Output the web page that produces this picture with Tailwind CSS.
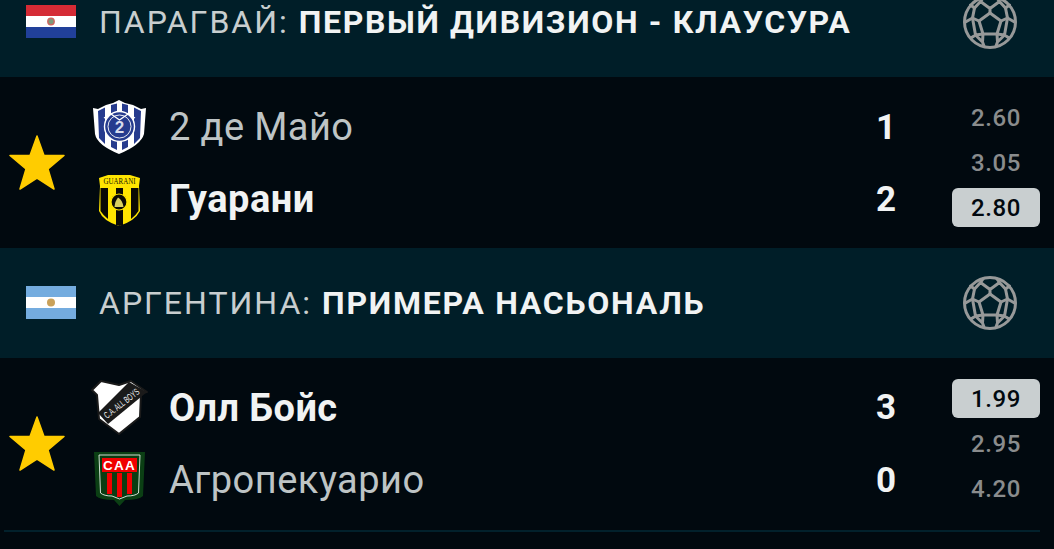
<!DOCTYPE html>
<html>
  <head>
    <meta charset="utf-8" />
    <title>Матчи</title>
    <script src="https://cdn.jsdelivr.net/npm/@tailwindcss/browser@4"></script>
  </head>
  <body class="h-[549px] overflow-hidden bg-[#01090f] font-['Roboto',sans-serif]">
    <svg class="hidden">
      <symbol id="ball" viewBox="0 0 54 54">
        <g fill="none" stroke="#979999" stroke-width="3" stroke-linejoin="round" stroke-linecap="round">
          <circle cx="27" cy="27" r="25.5" />
          <path d="M27 18 38 26 34 39H20L16 26Z" />
          <path d="M27 18V13.5L17.5 6.5 11.5 13 9.5 23 16 26M27 13.5 36.5 6.5 42.5 13 44.5 23 38 26" />
          <path d="M17.5 6.5 20 3M36.5 6.5 34 3M11.5 13 7.5 10M42.5 13 46.5 10M9.5 23 2.5 27M44.5 23 51.5 27" />
          <path d="M9.5 23 12.5 40 20 39 19.5 47 12.5 40M44.5 23 41.5 40 34 39 34.5 47 41.5 40M19.5 47 21 51M34.5 47 33 51M12.5 40 8 43M41.5 40 46 43" />
        </g>
      </symbol>
      <symbol id="star" viewBox="0 0 56 56">
        <path d="M28 1 35 20.5H55L39 34 45 54 28 43 11 54 17 34 1 20.5H21Z" fill="#ffcc00" stroke="#ffcc00" stroke-width="1.5" stroke-linejoin="round" />
      </symbol>
    </svg>

    <!-- Парагвай -->
    <div class="flex h-[110px] -mt-[33px] items-center bg-[#001e28] pl-[26px] pr-[37px]">
      <svg class="-mt-px h-[33px] w-[50px] shrink-0" viewBox="0 0 50 33">
        <rect width="50" height="11" fill="#d52b35" />
        <rect y="11" width="50" height="11" fill="#fff" />
        <rect y="22" width="50" height="11" fill="#21409a" />
        <circle cx="25" cy="16.5" r="3.2" fill="#7d9a7a" stroke="#d0655f" stroke-width="1.4" />
      </svg>
      <div class="ml-[23px] flex-1 text-[32px] tracking-[2px] text-[#c8cecf]">ПАРАГВАЙ: <span class="font-bold tracking-[1.65px] text-[#f1f3f3]">ПЕРВЫЙ ДИВИЗИОН - КЛАУСУРА</span></div>
      <svg class="size-[54px] shrink-0"><use href="#ball" /></svg>
    </div>

    <div class="flex h-[171px] items-center">
      <div class="flex w-[74px] justify-center"><svg class="size-[56px]"><use href="#star" /></svg></div>
      <div class="flex-1">
        <div class="flex h-[72px] items-center">
          <svg class="ml-[15px] size-[60px] shrink-0" viewBox="0 0 60 60">
            <path d="M4 11 9 12 17 8 24 6 30 3 36 6 44 8 52 12 57 11 55 37Q52 48 30 57 8 48 6 37Z" fill="#fff" />
            <path d="M9 14 16 10.5V47L10 41ZM22 8 28 6.5V53L22 50ZM33 6.5 39 8V50L33 53ZM45 10.5 52 14 51 41 45 47Z" fill="#263b8e" />
            <circle cx="30.5" cy="29.5" r="15" fill="#263b8e" stroke="#fff" stroke-width="1.4" />
            <circle cx="30.5" cy="29.5" r="11.5" fill="#263b8e" stroke="#fff" stroke-width="0.9" />
            <path d="M15 21 22 17 30.5 23 39 17 46 21" fill="none" stroke="#fff" stroke-width="1.4" />
            <text x="30.5" y="36" text-anchor="middle" font-family="'Liberation Sans'" font-weight="700" font-size="17" fill="#d8dcec">2</text>
          </svg>
          <div class="ml-[20px] flex-1 pt-px text-[38px] tracking-[0.4px] text-[#bec4c5]">2 де Майо</div>
          <div class="w-[60px] pt-[3px] text-center text-[35px] font-bold text-[#f1f3f3]">1</div>
        </div>
        <div class="flex h-[72px] items-center">
          <svg class="ml-[15px] size-[60px] shrink-0" viewBox="0 0 60 60">
            <path d="M10 9 19 6H41L51 9 50 17 51 42Q46 52 30 57 14 52 10 42L11 17Z" fill="#ffe500" />
            <path d="M11.5 19H19V50Q14 46 11.5 42ZM27 19H34V56L30.5 57 27 56ZM42 19H49.5V42Q47 46 42 50Z" fill="#0a0a05" />
            <circle cx="30" cy="33" r="8" fill="#0a0a05" stroke="#ffe500" stroke-width="1.2" />
            <path d="M25.5 38Q26 32 29 28.5 33.5 31 34.5 38Z" fill="#d8cf60" />
            <text x="30.5" y="15" text-anchor="middle" textLength="32" lengthAdjust="spacingAndGlyphs" font-family="'Liberation Serif'" font-size="8.5" fill="#1a1a05">GUARANI</text>
          </svg>
          <div class="ml-[20px] flex-1 pt-px text-[38px] font-bold tracking-[0.5px] text-[#f1f3f3]">Гуарани</div>
          <div class="w-[60px] pt-[3px] text-center text-[35px] font-bold text-[#f1f3f3]">2</div>
        </div>
      </div>
      <div class="ml-[36px] mr-[14px] flex w-[88px] flex-col items-center gap-[6px] text-[24px] font-medium tracking-[0.6px] text-[#8a8c8d]">
        <div class="flex h-[39px] w-full items-center justify-center">2.60</div>
        <div class="flex h-[39px] w-full items-center justify-center">3.05</div>
        <div class="flex h-[39px] w-full items-center justify-center rounded-[6px] bg-[#c9cfd0] text-[#01090f]">2.80</div>
      </div>
    </div>

    <!-- Аргентина -->
    <div class="flex h-[110px] items-center bg-[#001e28] pl-[26px] pr-[37px]">
      <svg class="-mt-px h-[33px] w-[50px] shrink-0" viewBox="0 0 50 33">
        <rect width="50" height="33" fill="#74acdf" />
        <rect y="11" width="50" height="11" fill="#fff" />
        <circle cx="25" cy="16.5" r="4" fill="#c9a15a" />
      </svg>
      <div class="ml-[23px] flex-1 text-[32px] tracking-[2px] text-[#c8cecf]">АРГЕНТИНА: <span class="font-bold tracking-[1.75px] text-[#f1f3f3]">ПРИМЕРА НАСЬОНАЛЬ</span></div>
      <svg class="size-[54px] shrink-0"><use href="#ball" /></svg>
    </div>

    <div class="flex h-[171px] items-center">
      <div class="flex w-[74px] justify-center"><svg class="size-[56px]"><use href="#star" /></svg></div>
      <div class="flex-1">
        <div class="flex h-[73px] items-center">
          <svg class="ml-[15px] size-[60px] shrink-0 overflow-visible" viewBox="0 0 60 60">
            <path d="M3 13 12 4 30 8 42 4 58 15 52 16 51 40 30 57 10 42 8 18Z" fill="#fff" stroke="#1a1a1a" stroke-width="2" stroke-linejoin="round" />
            <path d="M9 36 40 5 58 15 19 47Z" fill="#1a1a1a" />
            <text transform="translate(18 42) rotate(-38)" textLength="42" lengthAdjust="spacingAndGlyphs" font-family="'Liberation Sans'" font-size="9.5" fill="#f0f0f0">C.A. ALL BOYS</text>
          </svg>
          <div class="ml-[20px] flex-1 pt-[2px] text-[38px] font-bold tracking-[0.4px] text-[#f1f3f3]">Олл Бойс</div>
          <div class="w-[60px] pt-[3px] text-center text-[35px] font-bold text-[#f1f3f3]">3</div>
        </div>
        <div class="flex h-[73px] items-center">
          <svg class="ml-[15px] size-[60px] shrink-0" viewBox="0 0 60 60">
            <path d="M5 2H56L54 46Q50 50 36 50L30.5 56 25 50Q11 50 7 46Z" fill="#0b3f14" />
            <path d="M10 5H51L49.5 43Q46 46 38 46L30.5 49 23 46Q15 46 11.5 43Z" fill="#0a3d12" stroke="#e8efe8" stroke-width="0.9" />
            <rect x="13" y="8" width="35" height="14" fill="#f00000" />
            <path d="M18 23H23V44H18ZM28 23H33V47H28ZM38 23H43V44H38Z" fill="#f00000" />
            <text x="30.5" y="20" text-anchor="middle" font-family="'Liberation Sans'" font-weight="700" font-size="13.5" letter-spacing="1.2" fill="#fff">CAA</text>
          </svg>
          <div class="ml-[20px] flex-1 pt-px text-[38px] tracking-[0.5px] text-[#bec4c5]">Агропекуарио</div>
          <div class="w-[60px] pt-[3px] text-center text-[35px] font-bold text-[#f1f3f3]">0</div>
        </div>
      </div>
      <div class="ml-[36px] mr-[14px] flex w-[88px] flex-col items-center gap-[6px] text-[24px] font-medium tracking-[0.6px] text-[#8a8c8d]">
        <div class="flex h-[39px] w-full items-center justify-center rounded-[6px] bg-[#c9cfd0] text-[#01090f]">1.99</div>
        <div class="flex h-[39px] w-full items-center justify-center">2.95</div>
        <div class="flex h-[39px] w-full items-center justify-center">4.20</div>
      </div>
    </div>
    <div class="ml-[4px] mr-[14px] mt-px h-[2px] bg-[#02212c]"></div>
  </body>
</html>
